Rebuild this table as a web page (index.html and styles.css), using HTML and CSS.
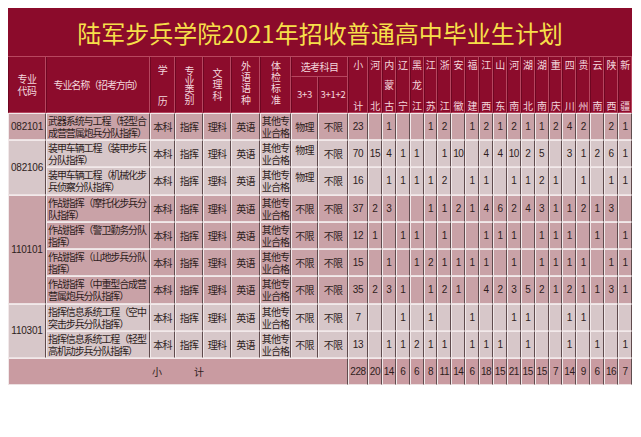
FILE: index.html
```html
<!DOCTYPE html>
<html lang="zh-CN">
<head>
<meta charset="utf-8">
<title>陆军步兵学院2021年招收普通高中毕业生计划</title>
<link rel="stylesheet" href="styles.css">
</head>
<body>
<table class="plan">
  <colgroup>
    <col class="c-code"><col class="c-name"><col class="c-edu"><col class="c-type"><col class="c-sci"><col class="c-lang"><col class="c-body"><col class="c-s33"><col class="c-s312"><col class="c-sum">
    <col><col><col><col><col><col><col><col><col><col><col><col><col><col><col><col><col><col><col>
  </colgroup>
  <thead>
    <tr class="r-title"><th colspan="29" class="title">陆军步兵学院2021年招收普通高中毕业生计划</th></tr>
    <tr class="r-h1">
      <th rowspan="2" class="h h-code">专业<br>代码</th>
      <th rowspan="2" class="h h-name">专业名称（招考方向）</th>
      <th rowspan="2" class="h"><div class="stack s-edu"><span>学</span><span>历</span></div></th>
      <th rowspan="2" class="h"><span class="vt vt-4">专业类别</span></th>
      <th rowspan="2" class="h"><span class="vt vt-3">文理科</span></th>
      <th rowspan="2" class="h"><span class="vt vt-4b">外语语种</span></th>
      <th rowspan="2" class="h"><span class="vt vt-4b">体检标准</span></th>
      <th colspan="2" class="h h-sel">选考科目</th>
      <th rowspan="2" class="h"><div class="stack s-p"><span>小</span><span>计</span></div></th>
      <th rowspan="2" class="h"><div class="stack s-p"><span>河</span><span>北</span></div></th>
      <th rowspan="2" class="h"><div class="stack s-p"><span>内</span><span>蒙</span><span>古</span></div></th>
      <th rowspan="2" class="h"><div class="stack s-p"><span>辽</span><span>宁</span></div></th>
      <th rowspan="2" class="h"><div class="stack s-p"><span>黑</span><span>龙</span><span>江</span></div></th>
      <th rowspan="2" class="h"><div class="stack s-p"><span>江</span><span>苏</span></div></th>
      <th rowspan="2" class="h"><div class="stack s-p"><span>浙</span><span>江</span></div></th>
      <th rowspan="2" class="h"><div class="stack s-p"><span>安</span><span>徽</span></div></th>
      <th rowspan="2" class="h"><div class="stack s-p"><span>福</span><span>建</span></div></th>
      <th rowspan="2" class="h"><div class="stack s-p"><span>江</span><span>西</span></div></th>
      <th rowspan="2" class="h"><div class="stack s-p"><span>山</span><span>东</span></div></th>
      <th rowspan="2" class="h"><div class="stack s-p"><span>河</span><span>南</span></div></th>
      <th rowspan="2" class="h"><div class="stack s-p"><span>湖</span><span>北</span></div></th>
      <th rowspan="2" class="h"><div class="stack s-p"><span>湖</span><span>南</span></div></th>
      <th rowspan="2" class="h"><div class="stack s-p"><span>重</span><span>庆</span></div></th>
      <th rowspan="2" class="h"><div class="stack s-p"><span>四</span><span>川</span></div></th>
      <th rowspan="2" class="h"><div class="stack s-p"><span>贵</span><span>州</span></div></th>
      <th rowspan="2" class="h"><div class="stack s-p"><span>云</span><span>南</span></div></th>
      <th rowspan="2" class="h"><div class="stack s-p"><span>陕</span><span>西</span></div></th>
      <th rowspan="2" class="h"><div class="stack s-p"><span>新</span><span>疆</span></div></th>
    </tr>
    <tr class="r-h2">
      <th class="h h-sub">3+3</th>
      <th class="h h-sub">3+1+2</th>
    </tr>
  </thead>
  <tbody>
    <tr class="row dark">
      <td class="code">082101</td>
      <td class="name">武器系统与工程（轻型合<br>成营营属炮兵分队指挥）</td>
      <td class="t">本科</td><td class="t">指挥</td><td class="t">理科</td><td class="t">英语</td><td class="t tight">其他专<br>业合格</td><td class="t">物理</td><td class="t">不限</td>
      <td class="n">23</td><td class="n"></td><td class="n">1</td><td class="n"></td><td class="n"></td><td class="n">1</td><td class="n">2</td><td class="n"></td><td class="n">1</td><td class="n">2</td><td class="n">1</td><td class="n">2</td><td class="n">1</td><td class="n">1</td><td class="n">2</td><td class="n">4</td><td class="n">2</td><td class="n"></td><td class="n">2</td><td class="n">1</td>
    </tr>
    <tr class="row light">
      <td class="code" rowspan="2">082106</td>
      <td class="name">装甲车辆工程（装甲步兵<br>分队指挥）</td>
      <td class="t">本科</td><td class="t">指挥</td><td class="t">理科</td><td class="t">英语</td><td class="t tight">其他专<br>业合格</td><td class="t top">物理</td><td class="t">不限</td>
      <td class="n">70</td><td class="n">15</td><td class="n">4</td><td class="n">1</td><td class="n">1</td><td class="n"></td><td class="n">1</td><td class="n">10</td><td class="n"></td><td class="n">4</td><td class="n">4</td><td class="n">10</td><td class="n">2</td><td class="n">5</td><td class="n"></td><td class="n">3</td><td class="n">1</td><td class="n">2</td><td class="n">6</td><td class="n">1</td>
    </tr>
    <tr class="row light tall">
      <td class="name">装甲车辆工程（机械化步<br>兵侦察分队指挥）</td>
      <td class="t">本科</td><td class="t">指挥</td><td class="t">理科</td><td class="t">英语</td><td class="t tight">其他专<br>业合格</td><td class="t top">物理</td><td class="t">不限</td>
      <td class="n">16</td><td class="n"></td><td class="n">1</td><td class="n">1</td><td class="n">1</td><td class="n">1</td><td class="n">2</td><td class="n"></td><td class="n">1</td><td class="n">1</td><td class="n"></td><td class="n">1</td><td class="n">1</td><td class="n">2</td><td class="n">1</td><td class="n"></td><td class="n">1</td><td class="n"></td><td class="n">1</td><td class="n">1</td>
    </tr>
    <tr class="row dark">
      <td class="code" rowspan="4">110101</td>
      <td class="name">作战指挥（摩托化步兵分<br>队指挥）</td>
      <td class="t">本科</td><td class="t">指挥</td><td class="t">理科</td><td class="t">英语</td><td class="t tight">其他专<br>业合格</td><td class="t">不限</td><td class="t">不限</td>
      <td class="n">37</td><td class="n">2</td><td class="n">3</td><td class="n"></td><td class="n"></td><td class="n">1</td><td class="n">1</td><td class="n">2</td><td class="n">1</td><td class="n">4</td><td class="n">6</td><td class="n">2</td><td class="n">4</td><td class="n">3</td><td class="n">1</td><td class="n">1</td><td class="n">2</td><td class="n">1</td><td class="n">3</td><td class="n"></td>
    </tr>
    <tr class="row dark">
      <td class="name">作战指挥（警卫勤务分队<br>指挥）</td>
      <td class="t">本科</td><td class="t">指挥</td><td class="t">理科</td><td class="t">英语</td><td class="t tight">其他专<br>业合格</td><td class="t">不限</td><td class="t">不限</td>
      <td class="n">12</td><td class="n">1</td><td class="n"></td><td class="n">1</td><td class="n">1</td><td class="n"></td><td class="n">1</td><td class="n"></td><td class="n"></td><td class="n">1</td><td class="n">1</td><td class="n">1</td><td class="n"></td><td class="n">1</td><td class="n">1</td><td class="n">1</td><td class="n"></td><td class="n">1</td><td class="n"></td><td class="n">1</td>
    </tr>
    <tr class="row dark">
      <td class="name">作战指挥（山地步兵分队<br>指挥）</td>
      <td class="t">本科</td><td class="t">指挥</td><td class="t">理科</td><td class="t">英语</td><td class="t tight">其他专<br>业合格</td><td class="t">不限</td><td class="t">不限</td>
      <td class="n">15</td><td class="n"></td><td class="n">1</td><td class="n"></td><td class="n">1</td><td class="n">2</td><td class="n">1</td><td class="n">1</td><td class="n">1</td><td class="n">1</td><td class="n"></td><td class="n">1</td><td class="n"></td><td class="n">1</td><td class="n">1</td><td class="n">1</td><td class="n">1</td><td class="n"></td><td class="n">1</td><td class="n">1</td>
    </tr>
    <tr class="row dark tall">
      <td class="name">作战指挥（中重型合成营<br>营属炮兵分队指挥）</td>
      <td class="t">本科</td><td class="t">指挥</td><td class="t">理科</td><td class="t">英语</td><td class="t tight">其他专<br>业合格</td><td class="t">不限</td><td class="t">不限</td>
      <td class="n">35</td><td class="n">2</td><td class="n">3</td><td class="n">1</td><td class="n"></td><td class="n">1</td><td class="n">2</td><td class="n">1</td><td class="n"></td><td class="n">4</td><td class="n">2</td><td class="n">3</td><td class="n">5</td><td class="n">2</td><td class="n">1</td><td class="n">2</td><td class="n">1</td><td class="n">1</td><td class="n">3</td><td class="n">1</td>
    </tr>
    <tr class="row light">
      <td class="code" rowspan="2">110301</td>
      <td class="name">指挥信息系统工程（空中<br>突击步兵分队指挥）</td>
      <td class="t">本科</td><td class="t">指挥</td><td class="t">理科</td><td class="t">英语</td><td class="t tight">其他专<br>业合格</td><td class="t">不限</td><td class="t">不限</td>
      <td class="n">7</td><td class="n"></td><td class="n"></td><td class="n">1</td><td class="n"></td><td class="n">1</td><td class="n"></td><td class="n"></td><td class="n">1</td><td class="n"></td><td class="n"></td><td class="n">1</td><td class="n">1</td><td class="n"></td><td class="n"></td><td class="n">1</td><td class="n">1</td><td class="n"></td><td class="n"></td><td class="n"></td>
    </tr>
    <tr class="row light">
      <td class="name">指挥信息系统工程（轻型<br>高机动步兵分队指挥）</td>
      <td class="t">本科</td><td class="t">指挥</td><td class="t">理科</td><td class="t">英语</td><td class="t tight">其他专<br>业合格</td><td class="t">不限</td><td class="t">不限</td>
      <td class="n">13</td><td class="n"></td><td class="n">1</td><td class="n">1</td><td class="n">2</td><td class="n">1</td><td class="n">1</td><td class="n"></td><td class="n">1</td><td class="n">1</td><td class="n">1</td><td class="n"></td><td class="n">1</td><td class="n"></td><td class="n"></td><td class="n">1</td><td class="n"></td><td class="n">1</td><td class="n"></td><td class="n">1</td>
    </tr>
    <tr class="row total">
      <td colspan="9" class="total-label"><span>小</span><span>计</span></td>
      <td class="n">228</td><td class="n">20</td><td class="n">14</td><td class="n">6</td><td class="n">6</td><td class="n">8</td><td class="n">11</td><td class="n">14</td><td class="n">6</td><td class="n">18</td><td class="n">15</td><td class="n">21</td><td class="n">15</td><td class="n">15</td><td class="n">7</td><td class="n">14</td><td class="n">9</td><td class="n">6</td><td class="n">16</td><td class="n">7</td>
    </tr>
  </tbody>
</table>
</body>
</html>
```
FILE: styles.css
```css
body {
  margin: 8px;
  background: #ffffff;
  font-family: "Noto Sans CJK SC", "Noto Sans", sans-serif;
}

.plan {
  width: 624px;
  table-layout: fixed;
  border-collapse: separate;
  border-spacing: 0;
}

.c-code { width: 38px; }
.c-name { width: 104px; }
.c-edu { width: 25px; }
.c-type { width: 28px; }
.c-sci { width: 28px; }
.c-lang { width: 29px; }
.c-body { width: 31px; }
.c-s33 { width: 27px; }
.c-s312 { width: 30px; }
.c-sum { width: 20px; }

.plan th,
.plan td {
  padding: 0;
  white-space: nowrap;
}
.plan td { overflow: hidden; }

/* title */
.r-title { height: 49px; }
.title {
  background: #8b0b2b;
  color: #f6df4a;
  font-size: 24px;
  font-weight: normal;
  text-align: center;
  vertical-align: middle;
  border-bottom: 1px solid #b8475f;
}

/* header */
.r-h1 { height: 20px; }
.r-h2 { height: 36px; }
.h {
  background: #8c0c2c;
  color: #f3d7dd;
  font-size: 10px;
  font-weight: normal;
  line-height: 11px;
  letter-spacing: -0.6px;
  text-align: center;
  vertical-align: middle;
  border-right: 1px solid #b6465f;
  border-bottom: 1px solid #b6465f;
  border-left: 1px solid #6e0621;
}
.h-code { line-height: 12px; }
.h-name { letter-spacing: -1.1px; }
.h-sub { letter-spacing: -0.3px; font-size: 9.5px; }

.stack {
  display: flex;
  flex-direction: column;
  align-items: center;
  justify-content: space-between;
  margin: 0 auto;
  font-size: 10px;
}
.stack span { display: block; line-height: 11px; }
.s-p { height: 52px; }
.s-edu { height: 42px; }

.vt {
  display: inline-block;
  writing-mode: vertical-rl;
  font-size: 10px;
  line-height: 12px;
}
.vt-4 { letter-spacing: -0.3px; padding-top: 2px; }
.vt-3 { letter-spacing: 1.5px; padding-top: 3px; }
.vt-4b { letter-spacing: 1.3px; }

/* body rows */
.row { height: 27px; }
.row.tall { height: 28px; }
.dark td { background: #c9a2a7; }
.light td { background: #d7c7c9; }
.total td { background: #c99ba1; }

.plan td {
  color: #2e1d1c;
  font-size: 10px;
  line-height: 12px;
  text-align: center;
  vertical-align: middle;
  border-top: 1px solid #f2e9ea;
  border-left: 1px solid #f2e9ea;
  border-bottom: 1px solid #ece1e2;
  border-right: 1px solid #5f4b4d;
}

.code {
  font-family: "Liberation Sans", sans-serif;
  font-size: 9.5px;
  letter-spacing: -0.2px;
}
.plan td.name {
  text-align: left;
  padding-left: 1px;
  font-size: 10px;
  letter-spacing: -1.1px;
  line-height: 12px;
}
.t { letter-spacing: -0.8px; }
.plan td.tight { line-height: 12px; }
.plan td.top { vertical-align: top; padding-top: 3px; }
.n {
  font-family: "Liberation Sans", sans-serif;
  font-size: 10px;
  letter-spacing: -0.4px;
}

.total-label span { display: inline-block; margin: 0 16px; }
```
